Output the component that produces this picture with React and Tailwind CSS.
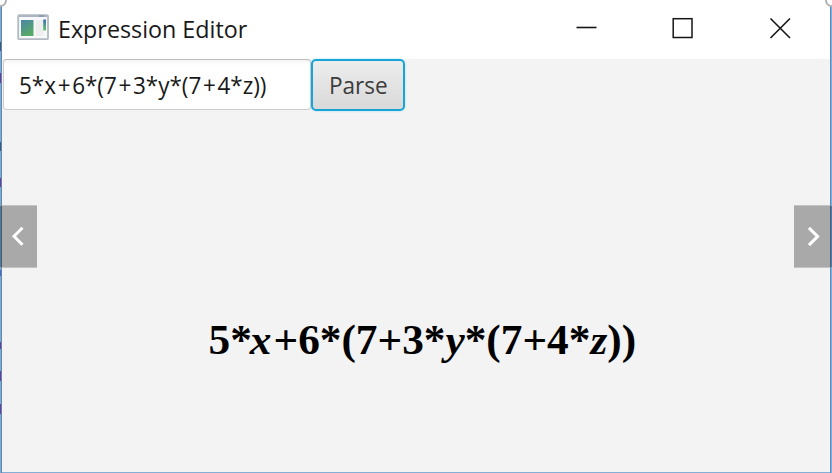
import React from "react";

function AppIcon() {
  return (
    <svg className="ml-[15px] mt-[14px] h-[27px] w-[32px] shrink-0" viewBox="0 0 32 27">
      <defs>
        <linearGradient id="pane" x1="0" y1="0" x2="0.5" y2="1">
          <stop offset="0" stopColor="#4b85a8" />
          <stop offset="1" stopColor="#58aa67" />
        </linearGradient>
        <linearGradient id="bar" x1="0" y1="0" x2="0" y2="1">
          <stop offset="0" stopColor="#3b6fae" />
          <stop offset="1" stopColor="#67c36d" />
        </linearGradient>
      </defs>
      <rect x="1.2" y="1.2" width="29.8" height="24" rx="1" fill="#f7f8f9" stroke="#b3bac2" strokeWidth="1.8" />
      <path d="M2 2.2h28" stroke="#aab3bf" strokeWidth="1.6" />
      <path d="M22 2h5" stroke="#718caf" strokeWidth="1.2" />
      <rect x="4" y="6" width="12.5" height="16" fill="url(#pane)" />
      <path d="M18.5 6v16h8V6" fill="#eeeeef" />
      <rect x="26.2" y="5.5" width="2.8" height="11" fill="url(#bar)" />
    </svg>
  );
}

function TitleBar() {
  return (
    <header className="flex h-[59px] shrink-0 bg-white">
      <AppIcon />
      <h1 className="ml-[9px] mt-[11px] h-9 w-[190px] origin-left scale-x-[0.97] whitespace-nowrap text-[24px] leading-9">
        Expression Editor
      </h1>
      <svg className="ml-auto mr-[38px] mt-[15px] h-6 w-[220px]" viewBox="0 0 220 24" fill="none" stroke="#161616">
        <path d="M4.5 12.5h20" strokeWidth="1.6" />
        <rect x="101.2" y="3.7" width="18.8" height="18.8" strokeWidth="1.5" />
        <path d="M198.5 3.5l19.5 19.5M218 3.5L198.5 23" strokeWidth="1.6" />
      </svg>
    </header>
  );
}

function Plus() {
  return <span className="mx-[1.8px]">+</span>;
}

function Toolbar() {
  return (
    <div className="flex h-[52px] shrink-0">
      <div className="ml-px flex h-[51px] w-[308px] items-center rounded-[4px] border border-[#cdcdcd] border-t-[#bdbdbd] bg-white bg-linear-to-b from-[#f4f4f4] to-white to-10% pl-[15px]">
        <span className="origin-left scale-x-[0.935] whitespace-nowrap text-[24px] leading-9">
          5*x<Plus />6*(7<Plus />3*y*(7<Plus />4*z))
        </span>
      </div>
      <button className="flex h-[52px] w-[94px] items-center justify-center rounded-[5px] border-2 border-[#18a5d5] bg-linear-to-b from-[#ededed] to-[#d9d9d9] shadow-[0_0_2px_#8fd7ef]">
        <span className="scale-x-[0.94] text-[24px] leading-9 text-[#3c3c3c]">Parse</span>
      </button>
    </div>
  );
}

function Arrow({ side }) {
  const left = side === "left";
  return (
    <button
      aria-label={left ? "Previous" : "Next"}
      className={
        left
          ? "absolute left-0 top-[205px] h-[63px] w-[37px] border-y border-white/30 bg-black/30"
          : "absolute right-0 top-[205px] h-[63px] w-[38px] border-y border-white/30 bg-black/30"
      }
    >
      <svg className="h-full w-full" viewBox="0 0 37 60" fill="none" stroke="white" strokeWidth="3">
        <path d={left ? "M22.5 21.2l-8.5 8.5 8.5 8.5" : "M14.5 21.5l8.5 8.5-8.5 8.5"} />
      </svg>
    </button>
  );
}

export default function App() {
  return (
    <div className="relative h-[473px] w-[832px] overflow-hidden bg-[#83aed5] font-['Open_Sans','Noto_Sans',sans-serif] text-[#191919]">
      <svg className="absolute left-0 top-0 h-full w-[2px]" viewBox="0 0 2 473">
        <path d="M0 0v473" stroke="#8ea9b8" strokeWidth="2" />
        <path d="M0 42v9M0 142v9" stroke="#4b5860" strokeWidth="2" />
        <path d="M0 73v10M0 178v9M0 342v7M0 371v10M0 404v10" stroke="#763b82" strokeWidth="2" />
        <path d="M0 270v6" stroke="#5865aa" strokeWidth="2" />
        <path d="M1.5 0v473" stroke="#5188c5" />
      </svg>
      <div className="ml-[2px] flex h-[472px] w-[828px] flex-col bg-[#f3f3f3]">
        <TitleBar />
        <Toolbar />
        <main className="flex flex-1 justify-center pl-[13px]">
          <p className="mt-[204px] h-[50px] scale-x-[1.007] whitespace-nowrap font-['Liberation_Serif',serif] text-[43px] font-bold leading-[50px] text-black">
            5*<i className="-ml-[2px] mr-[2px]">x</i>+6*(7+3*<i>y</i>*(7+4*<i>z</i>))
          </p>
        </main>
      </div>
      <div className="absolute right-px top-0 h-full w-px bg-[#528dcc]" />
      <div className="absolute -left-[6px] -top-[6px] size-[13px] rounded-full border-2 border-[#b3b3b3] bg-white" />
      <div className="absolute -right-[6px] -top-[6px] size-[13px] rounded-full border-2 border-[#b3b3b3] bg-white" />
      <Arrow side="left" />
      <Arrow side="right" />
    </div>
  );
}
